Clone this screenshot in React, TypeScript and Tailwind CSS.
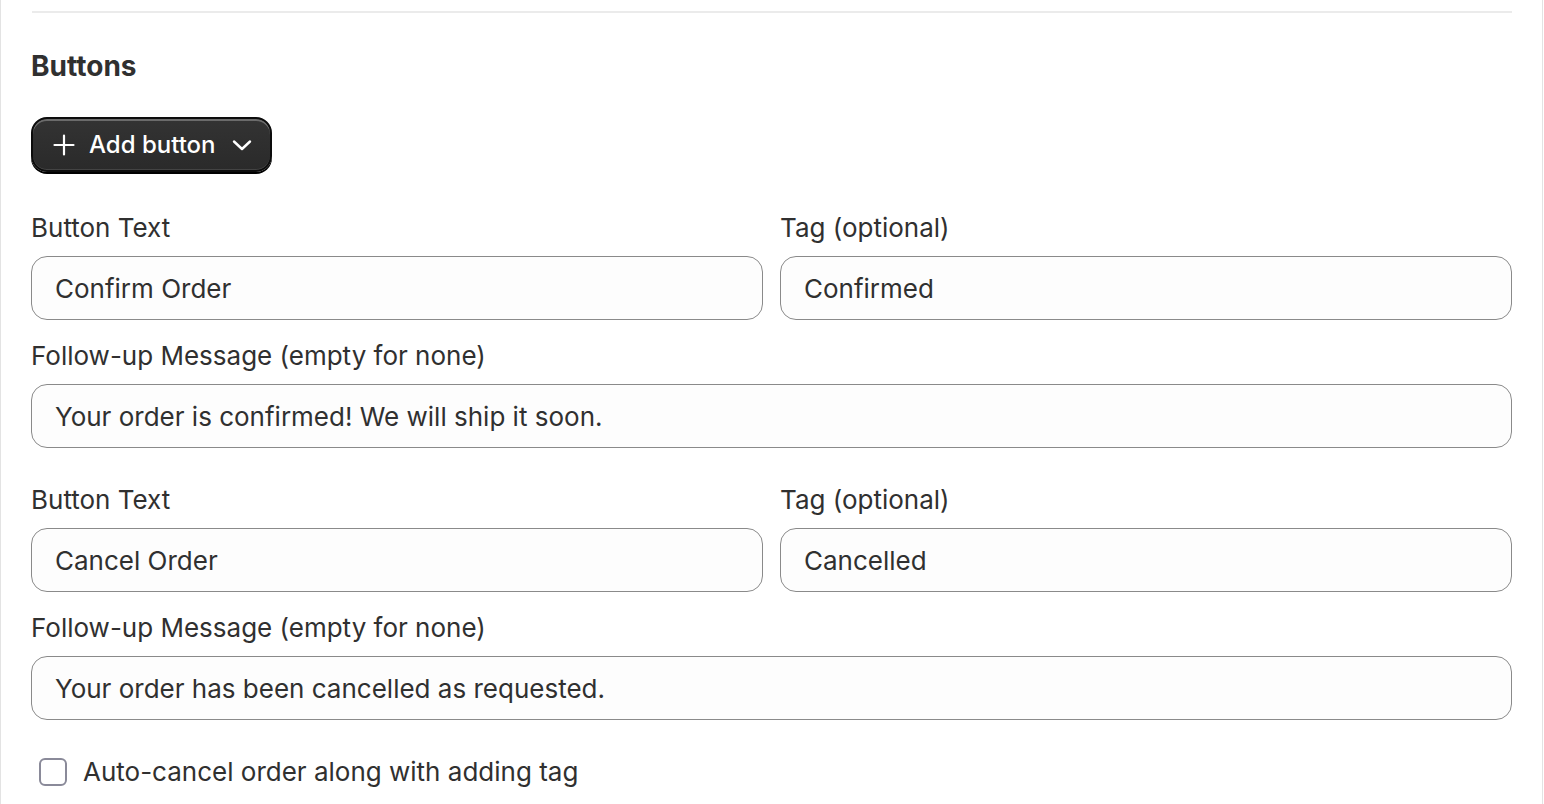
import React from "react";

function Field({ label, value }: { label: string; value: string }) {
  return (
    <div className="flex flex-col gap-3 min-w-0">
      <label className="text-[26px] leading-[32px] text-[#303030]">{label}</label>
      <div className="h-[64px] rounded-[16px] border border-[#8a8a8a] bg-[#fdfdfd] px-[23px] flex items-center text-[26px] text-[#303030]">
        {value}
      </div>
    </div>
  );
}

function Group({ text, tag, msg }: { text: string; tag: string; msg: string }) {
  return (
    <div className="flex flex-col gap-5">
      <div className="grid grid-cols-2 gap-[17px]">
        <Field label="Button Text" value={text} />
        <Field label="Tag (optional)" value={tag} />
      </div>
      <Field label="Follow-up Message (empty for none)" value={msg} />
    </div>
  );
}

export default function App() {
  return (
    <div
      className="w-[1544px] h-[804px] bg-white overflow-hidden"
      style={{ fontFamily: "Inter, 'Noto Sans', sans-serif" }}
    >
      <div className="h-full border-l border-r border-[#e3e3e3] px-[30px] mr-[1px]">
        <div className="h-[11px]" />
        <div className="h-[2px] bg-[#ebebeb] ml-[1px]" />
        <h2 className="mt-[37px] text-[28px] leading-[32px] font-bold text-[#303030]">Buttons</h2>
        <div className="mt-[35px]">
          <button className="h-[55px] pl-[20px] pr-[18px] rounded-[16px] bg-gradient-to-b from-[#333333] to-[#2a2a2a] text-white flex items-center text-[24px] font-[550] shadow-[inset_0_2px_0_rgba(255,255,255,0.28),inset_0_-1px_0_rgba(255,255,255,0.12),0_2px_0_#000] border-2 border-[#0c0c0c]">
            <svg width="22" height="22" viewBox="0 0 22 22" fill="none" stroke="white" strokeWidth="2.2" strokeLinecap="round">
              <path d="M11 1.5v19M1.5 11h19" />
            </svg>
            <span className="ml-[14px]">Add button</span>
            <svg className="ml-[16px]" width="20" height="20" viewBox="0 0 20 20" fill="none" stroke="white" strokeWidth="2.4" strokeLinecap="round" strokeLinejoin="round">
              <path d="M2 6.5l8 7.5 8-7.5" />
            </svg>
          </button>
        </div>
        <div className="mt-[40px] flex flex-col gap-[36px]">
          <Group text="Confirm Order" tag="Confirmed" msg="Your order is confirmed! We will ship it soon." />
          <Group text="Cancel Order" tag="Cancelled" msg="Your order has been cancelled as requested." />
        </div>
        <div className="mt-[32px] ml-[8px] flex items-center gap-[16px]">
          <div className="w-[28px] h-[28px] rounded-[6px] border-2 border-[#8a8a99] bg-white" />
          <span className="text-[26px] text-[#303030]">Auto-cancel order along with adding tag</span>
        </div>
      </div>
    </div>
  );
}
